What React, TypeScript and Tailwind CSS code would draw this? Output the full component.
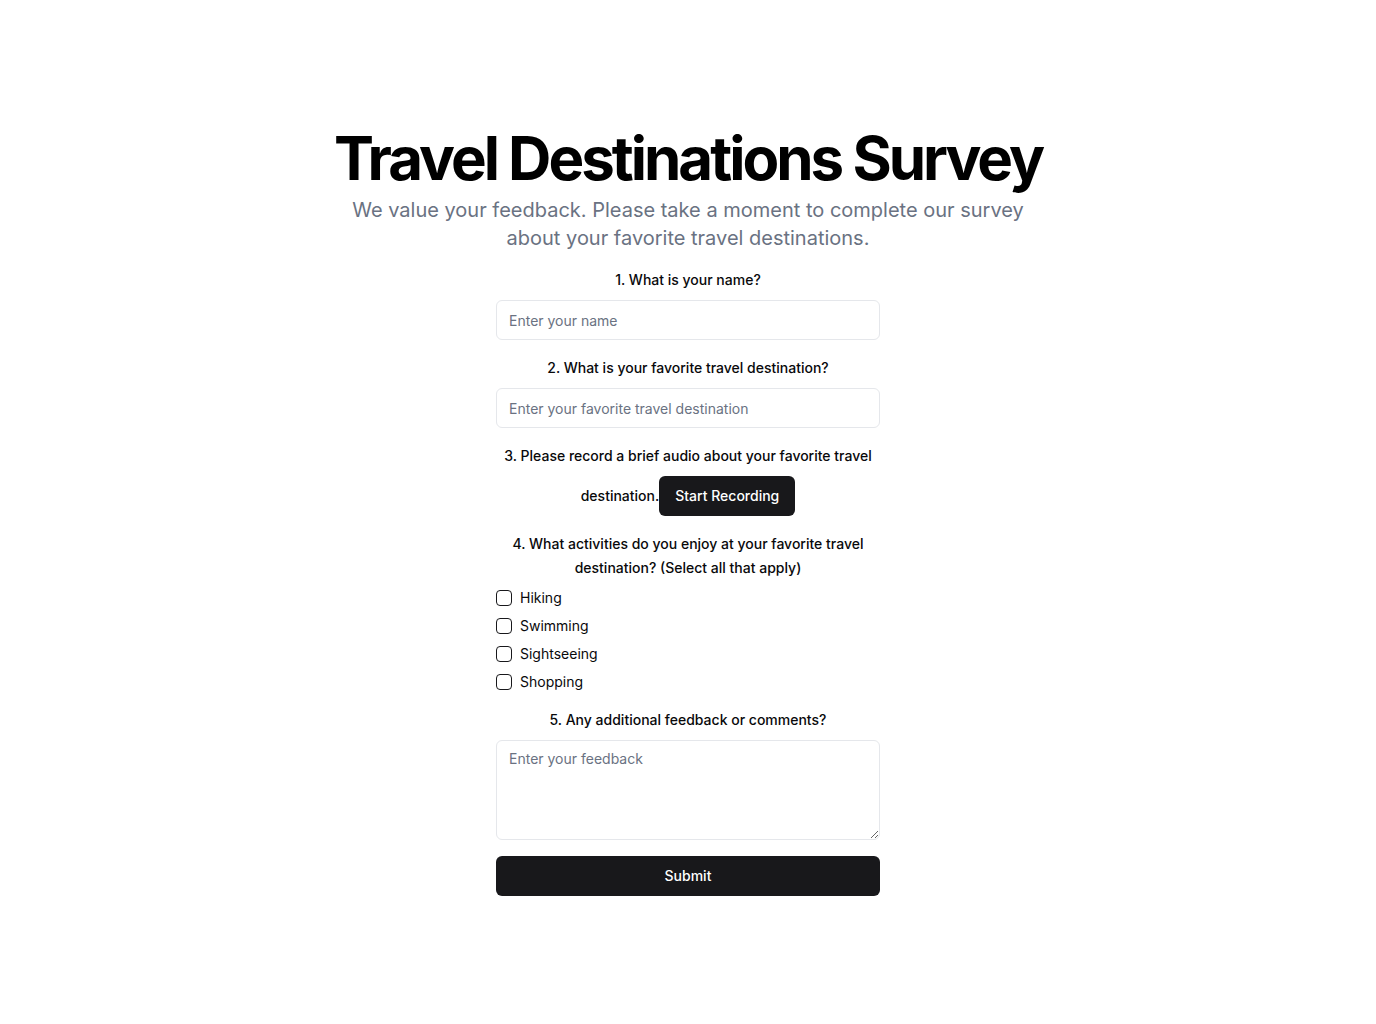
import React from "react";

export default function App() {
  const activities = ["Hiking", "Swimming", "Sightseeing", "Shopping"];
  return (
    <div
      className="min-h-screen flex items-center justify-center bg-white text-[#09090b]"
      style={{ fontFamily: "Inter, 'Noto Sans', sans-serif" }}
    >
      <div className="flex flex-col items-center">
        <div className="flex flex-col items-center space-y-2 text-center">
          <h1 className="text-6xl leading-none font-bold tracking-tighter text-black">
            Travel Destinations Survey
          </h1>
          <p className="max-w-[700px] text-xl leading-7 text-gray-500">
            We value your feedback. Please take a moment to complete our survey about your favorite travel
            destinations.
          </p>
        </div>
        <form className="mt-4 w-[384px] flex flex-col gap-4" onSubmit={(e) => e.preventDefault()}>
          <div className="flex flex-col gap-2">
            <label className="block text-center text-sm leading-6 font-medium">1. What is your name?</label>
            <input
              className="h-10 w-full rounded-md border border-gray-200 bg-white px-3 text-sm outline-none placeholder:text-gray-500"
              placeholder="Enter your name"
            />
          </div>
          <div className="flex flex-col gap-2">
            <label className="block text-center text-sm leading-6 font-medium">
              2. What is your favorite travel destination?
            </label>
            <input
              className="h-10 w-full rounded-md border border-gray-200 bg-white px-3 text-sm outline-none placeholder:text-gray-500"
              placeholder="Enter your favorite travel destination"
            />
          </div>
          <div>
            <label className="block text-center text-sm leading-6 font-medium">
              3. Please record a brief audio about your favorite travel destination.
              <button
                type="button"
                className="mt-2 inline-flex h-10 items-center justify-center rounded-md bg-[#18181b] px-4 text-sm font-medium text-white"
              >
                Start Recording
              </button>
            </label>
          </div>
          <div className="flex flex-col gap-2">
            <label className="block text-center text-sm leading-6 font-medium">
              4. What activities do you enjoy at your favorite travel destination? (Select all that apply)
            </label>
            <div className="flex flex-col gap-2">
              {activities.map((a) => (
                <div key={a} className="flex items-center gap-2">
                  <span className="h-4 w-4 shrink-0 rounded-[4px] border border-[#18181b] bg-white" />
                  <span className="text-sm leading-5">{a}</span>
                </div>
              ))}
            </div>
          </div>
          <div className="flex flex-col gap-2">
            <label className="block text-center text-sm leading-6 font-medium">
              5. Any additional feedback or comments?
            </label>
            <textarea
              className="block h-[100px] w-full rounded-md border border-gray-200 bg-white px-3 py-2 text-sm outline-none placeholder:text-gray-500"
              placeholder="Enter your feedback"
            />
          </div>
          <button
            type="submit"
            className="h-10 w-full rounded-md bg-[#18181b] text-sm font-medium text-white"
          >
            Submit
          </button>
        </form>
      </div>
    </div>
  );
}
